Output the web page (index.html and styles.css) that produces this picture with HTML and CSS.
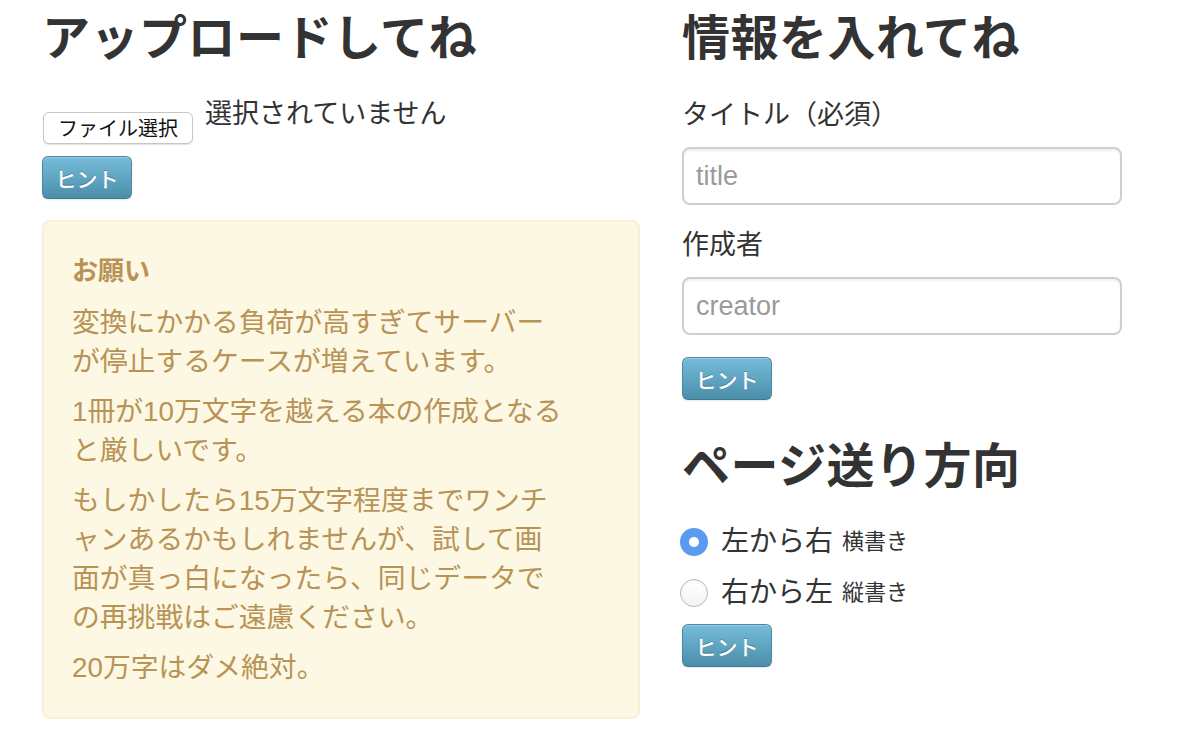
FILE: index.html
```html
<!DOCTYPE html>
<html lang="ja">
<head>
<meta charset="utf-8">
<title>アップロード</title>
<link rel="stylesheet" href="styles.css">
</head>
<body>
<div class="page">
  <section class="col col-left">
    <h3 class="heading">アップロードしてね</h3>
    <div class="file-row">
      <button class="file-btn" type="button">ファイル選択</button>
      <span class="file-status">選択されていません</span>
    </div>
    <button class="hint-btn" type="button">ヒント</button>
    <div class="alert">
      <strong class="alert-title">お願い</strong>
      <p>変換にかかる負荷が高すぎてサーバーが停止するケースが増えています。</p>
      <p>1冊が10万文字を越える本の作成となると厳しいです。</p>
      <p>もしかしたら15万文字程度までワンチャンあるかもしれませんが、試して画面が真っ白になったら、同じデータでの再挑戦はご遠慮ください。</p>
      <p>20万字はダメ絶対。</p>
    </div>
  </section>
  <section class="col col-right">
    <h3 class="heading">情報を入れてね</h3>
    <label class="field-label" for="title">タイトル（必須）</label>
    <input class="text-input" id="title" type="text" placeholder="title">
    <label class="field-label" for="creator">作成者</label>
    <input class="text-input" id="creator" type="text" placeholder="creator">
    <button class="hint-btn hint-right" type="button">ヒント</button>
    <h3 class="heading heading-dir">ページ送り方向</h3>
    <label class="radio-row">
      <input class="radio" type="radio" name="dir" checked>
      <span class="radio-main">左から右</span><span class="radio-sub">横書き</span>
    </label>
    <label class="radio-row">
      <input class="radio" type="radio" name="dir">
      <span class="radio-main">右から左</span><span class="radio-sub">縦書き</span>
    </label>
    <button class="hint-btn hint-last" type="button">ヒント</button>
  </section>
</div>
</body>
</html>
```
FILE: styles.css
```css
* { box-sizing: border-box; }
html, body { margin: 0; padding: 0; background: #fff; }
body {
  font-family: "Liberation Sans", "Noto Sans CJK JP", sans-serif;
  color: #333;
  font-size: 28px;
  line-height: 40px;
}
.page {
  display: flex;
  gap: 42px;
  padding-left: 42px;
}
.col { display: flex; flex-direction: column; align-items: flex-start; }
.col-left { width: 598px; }
.col-right { width: 440px; }

.heading {
  margin: 0;
  font-family: "Noto Sans CJK JP", sans-serif;
  font-size: 48px;
  line-height: 68px;
  font-weight: 700;
  color: #333;
  letter-spacing: 0.5px;
}

.file-row {
  display: flex;
  align-items: flex-start;
  margin-top: 24px;
}
.file-btn {
  margin-top: 20px;
  margin-left: 1px;
  width: 150px;
  height: 32px;
  padding: 0;
  background: #fff;
  border: 1px solid #c6c6c6;
  border-radius: 6px;
  box-shadow: 0 1px 1px rgba(0,0,0,0.12);
  font-family: "Noto Sans CJK JP", sans-serif;
  font-size: 20px;
  line-height: 30px;
  color: #111;
}
.file-status {
  margin-left: 12px;
  font-family: "Noto Sans CJK JP", sans-serif;
  font-size: 27px;
  line-height: 40px;
  color: #333;
}

.hint-btn {
  width: 90px;
  height: 43px;
  padding: 0;
  margin-top: 12px;
  border: 1px solid #4a88a3;
  border-bottom-color: #3f7a93;
  border-radius: 6px;
  background: linear-gradient(#76bcd8, #4a8eaa);
  box-shadow: inset 0 1px 0 rgba(255,255,255,0.25), 0 1px 2px rgba(0,0,0,0.1);
  color: #fff;
  font-family: "Noto Sans CJK JP", sans-serif;
  font-size: 21px;
  font-weight: 500;
  line-height: 40px;
  text-shadow: 0 -1px 0 rgba(0,0,0,0.25);
}

.alert {
  margin-top: 21px;
  width: 598px;
  padding: 29px 70px 19px 28px;
  background: #fcf8e3;
  border: 2px solid #fbeed5;
  border-radius: 8px;
  color: #b89356;
  font-size: 27.8px;
  line-height: 39px;
}
.alert-title {
  display: block;
  font-weight: 700;
  font-size: 26px;
  line-height: 40px;
  margin-bottom: 12px;
}
.alert p { margin: 0 0 11px; }

.field-label {
  display: block;
  margin-top: 27px;
  font-size: 27px;
  line-height: 40px;
  color: #333;
}
.text-input {
  margin-top: 12px;
  width: 440px;
  height: 58px;
  padding: 0 12px;
  border: 2px solid #cfcfcf;
  border-radius: 8px;
  box-shadow: inset 0 2px 2px rgba(0,0,0,0.06);
  font-family: "Liberation Sans", Arial, sans-serif;
  font-size: 27px;
  color: #555;
  outline: none;
}
.text-input::placeholder { color: #9a9a9a; }
.text-input + .field-label { margin-top: 20px; }

.hint-right { margin-top: 22px; }
.heading-dir { margin-top: 28px; }

.radio-row {
  display: flex;
  align-items: center;
  height: 40px;
  margin-top: 26px;
  color: #333;
}
.radio-row + .radio-row { margin-top: 11px; }
.radio {
  appearance: none;
  -webkit-appearance: none;
  margin: 0 13px 0 -2px;
  width: 28px;
  height: 28px;
  border-radius: 50%;
  border: 1px solid #b9b9b9;
  background: linear-gradient(#fff, #f3f3f3);
  box-shadow: inset 0 1px 1px rgba(0,0,0,0.05);
}
.radio:checked {
  border: none;
  background: radial-gradient(circle, #fff 0 4.5px, #5a9bf2 5.5px);
  box-shadow: none;
}
.radio-main { font-size: 28px; }
.radio-sub { font-size: 22px; margin-left: 9px; }

.hint-last { margin-top: 11px; }
```
